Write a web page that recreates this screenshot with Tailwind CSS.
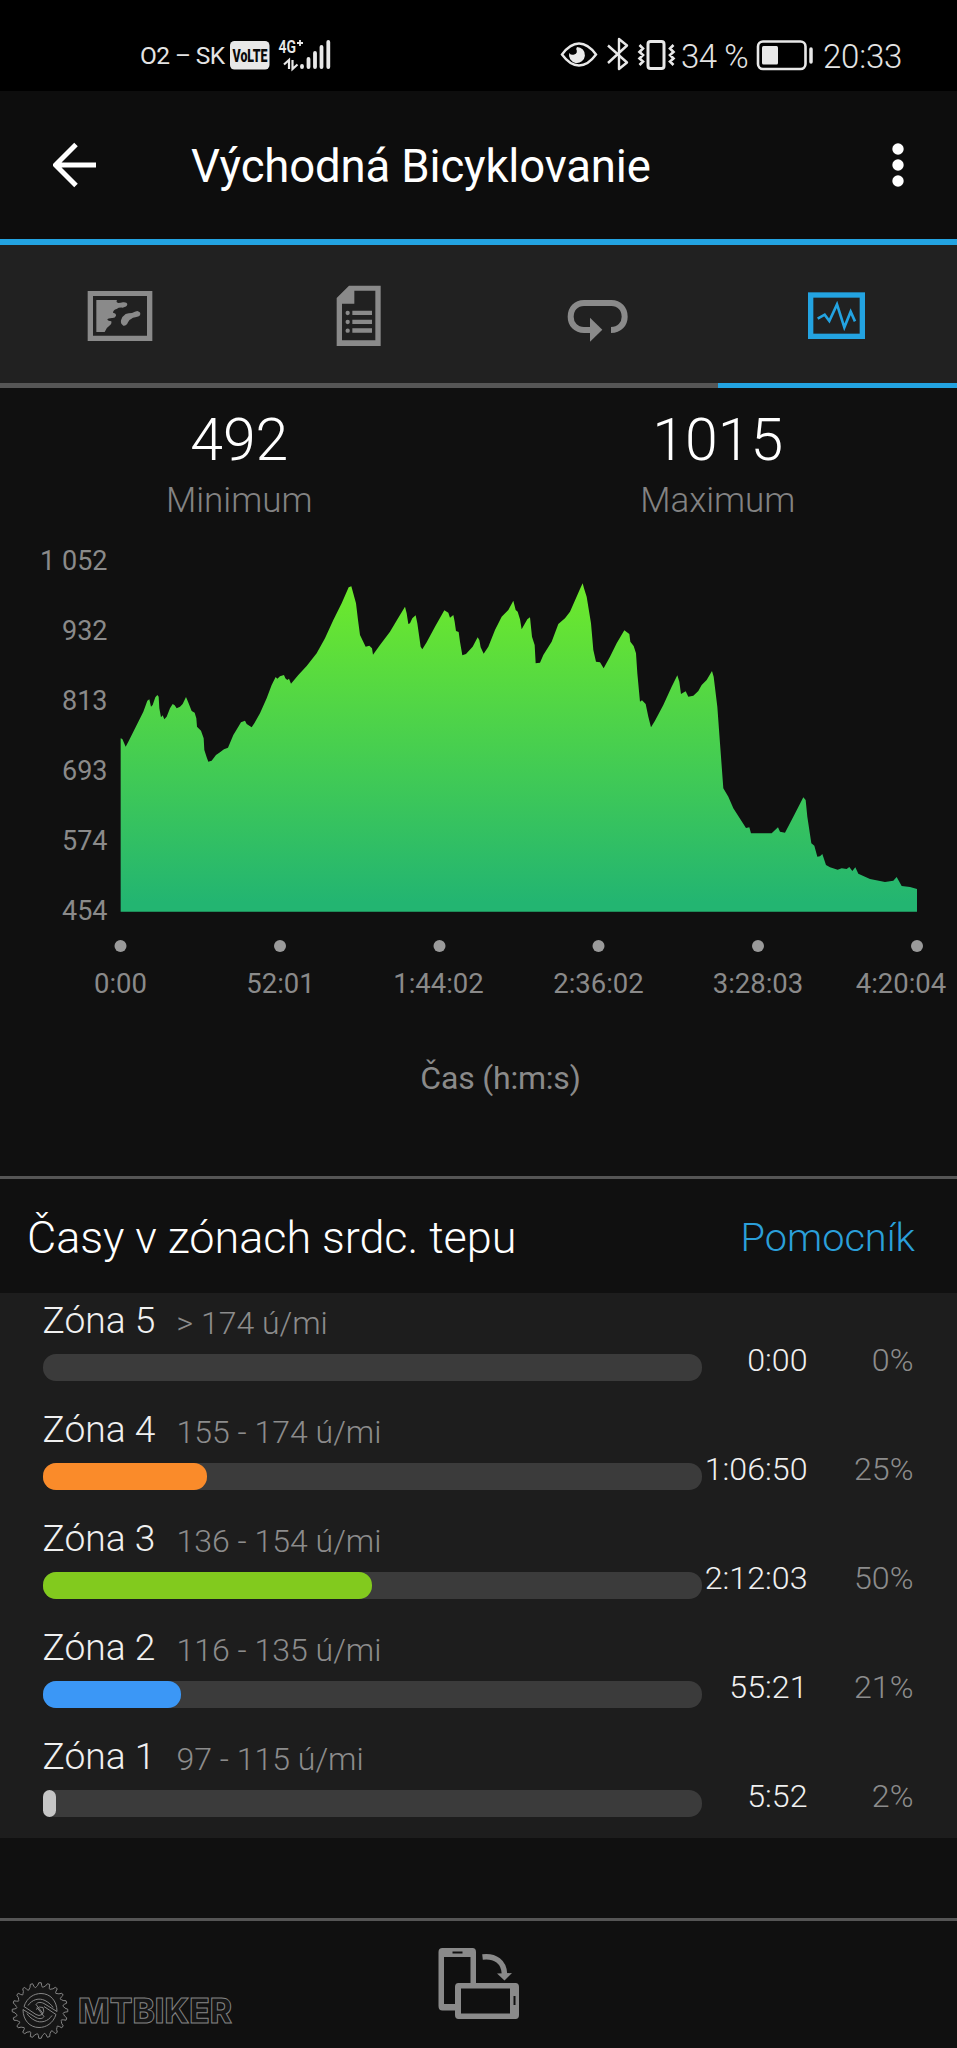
<!DOCTYPE html>
<html lang="sk">
<head>
<meta charset="utf-8">
<title>Východná Bicyklovanie</title>
<script src="https://cdn.jsdelivr.net/npm/@tailwindcss/browser@4"></script>
</head>
<body class="bg-[#101010] w-[957px] h-[2048px] overflow-hidden flex flex-col font-[Roboto,sans-serif] text-white">

<!-- Status bar -->
<div class="h-[91px] shrink-0 bg-black flex items-center pl-[140px] pr-[54px] pt-[32px] pb-[13px] text-[#e4e4e4]">
  <span class="w-[90px] text-[24.5px] leading-[46px] pt-[2px] tracking-[-0.6px] font-normal whitespace-nowrap">O2 – SK</span>
  <svg class="w-[104px] h-[36px]" viewBox="230 37 104 36" fill="#e8e8e8">
    <rect x="230" y="41" width="39.5" height="28.5" rx="4.5"/>
    <text x="232.5" y="61.8" font-family="Roboto, sans-serif" font-weight="900" font-size="19" textLength="35" lengthAdjust="spacingAndGlyphs" fill="#0a0a0a">VoLTE</text>
    <text x="278.5" y="53" font-family="Roboto, sans-serif" font-weight="600" font-size="17.5" textLength="17.5" lengthAdjust="spacingAndGlyphs">4G</text>
    <path d="M297 43h6M300 40v6" stroke="#e8e8e8" stroke-width="1.8"/>
    <path d="M284 64.5l5-4.500v9M292.500 60v9l5-4.500" fill="none" stroke="#e8e8e8" stroke-width="2.200"/>
    <g stroke="#e8e8e8" stroke-width="3.800" stroke-linecap="round"><path d="M302 66v1M308.500 59v8M315 53v14M321.500 47v20M328.300 42v25"/></g>
  </svg>
  <svg class="w-[116px] h-[36px] ml-[226px]" viewBox="560 37 116 36" fill="none" stroke="#e8e8e8" stroke-width="2.400">
    <path d="M562 54.500Q570 43.500 579 43.500T596 54.500Q588 65.500 579 65.500T562 54.500Z"/>
    <path d="M577 47a8 8 0 1 1-7.800 6q1.800 2.500 5 1.600 4-1.600 2-5.600z" fill="#e8e8e8" stroke="none"/>
    <path d="M608 45.500l19 17-8 6.500v-30l8 6.500-19 17.500" stroke-linejoin="round"/>
    <rect x="648" y="41.500" width="16" height="27" rx="2.500" stroke-width="3"/>
    <path d="M639.500 45l3.500 3.500-3.500 3.500 3.500 3-3.500 3.500 3.500 3-3.500 3.500M673.500 45l-3.500 3.500 3.500 3.500-3.500 3 3.500 3.500-3.500 3 3.500 3.500" stroke-width="2.600"/>
  </svg>
  <span class="ml-[5px] w-[75px] text-[33px] leading-[46px] pt-[3px] tracking-[-0.5px] font-light whitespace-nowrap">34 %</span>
  <svg class="w-[58px] h-[36px]" viewBox="756 37 58 36" fill="none" stroke="#e8e8e8">
    <rect x="758" y="41.500" width="47.500" height="27.500" rx="5" stroke-width="2.600"/>
    <rect x="762" y="46" width="16" height="18.500" rx="1.500" fill="#e8e8e8" stroke="none"/>
    <path d="M811 49v13" stroke-width="3.500" stroke-linecap="round"/>
  </svg>
  <span class="ml-[9px] text-[33px] leading-[46px] pt-[3px] tracking-[-0.2px] font-light whitespace-nowrap">20:33</span>
</div>

<!-- App bar -->
<header class="h-[148px] shrink-0 bg-[#0d0d0d] flex items-center">
  <svg class="w-[44px] h-[46px] ml-[53px]" viewBox="53 142 44 46" fill="none" stroke="#fff" stroke-width="5"><path d="M96 165H56M76 144.500L55.500 165L76 185.500"/></svg>
  <h1 class="ml-[94px] pt-[4px] w-[701px] text-[45.5px] leading-[52px] font-normal tracking-[-0.15px] whitespace-nowrap">Východná Bicyklovanie</h1>
  <svg class="w-[12px] h-[46px]" viewBox="0 0 12 46" fill="#fff"><circle cx="6" cy="7" r="5.700"/><circle cx="6" cy="23" r="5.700"/><circle cx="6" cy="39" r="5.700"/></svg>
</header>
<div class="h-[6px] shrink-0 bg-[#23a3e1]"></div>

<!-- Tabs -->
<nav class="h-[143px] shrink-0 grid grid-cols-4 bg-[#212121] justify-items-center">
  <div class="w-full flex justify-center border-b-[5px] border-[#565656]">
    <svg class="w-[66px] h-[138px]" viewBox="80 -75 198 414" fill="#8a8a8a">
      <path fill-rule="evenodd" d="M82 63H276V213H82ZM98 78V197H260V78Z"/>
      <path d="M108 90H170Q166 97 174 99Q181 99 188 97Q200 96 201 103Q200 111 187 113Q175 112 169 117Q158 120 158 128Q168 130 167 137Q164 145 155 144Q142 144 141 149Q143 153 153 154Q155 162 147 167Q137 173 133 186H108Z"/>
      <path d="M231 123Q243 126 239 136Q233 142 218 143Q207 148 203 157Q199 168 189 167Q180 162 182 151Q186 138 196 132Q205 129 215 129Q224 125 231 123Z"/>
    </svg>
  </div>
  <div class="w-full flex justify-center border-b-[5px] border-[#565656]">
    <svg class="w-[66px] h-[138px]" viewBox="797 -75 198 414" fill="#8a8a8a">
      <path fill-rule="evenodd" d="M866 47H961V228H829V84ZM882 62V101H845V211H945V62Z"/>
      <circle cx="862" cy="129" r="6.500"/><circle cx="862" cy="156" r="6.500"/><circle cx="862" cy="182" r="6.500"/>
      <path d="M876 122h59v13h-59zM876 149h59v13h-59zM876 175h59v13h-59z"/>
    </svg>
  </div>
  <div class="w-full flex justify-center border-b-[5px] border-[#565656]">
    <svg class="w-[66px] h-[138px]" viewBox="45 -75 198 414" fill="none">
      <path d="M122 180H102C78 180 62 163 62 140C62 116 78 99 102 99H184C208 99 224 116 224 140C224 163 208 180 183 180" stroke="#8a8a8a" stroke-width="18"/>
      <path d="M120 143L157 179L120 215Z" fill="#8a8a8a"/>
    </svg>
  </div>
  <div class="w-full flex justify-center border-b-[5px] border-[#23a3e1]">
    <svg class="w-[66px] h-[138px]" viewBox="762 -75 198 414" fill="none" stroke="#23a3e1">
      <rect x="782" y="75" width="155" height="124" stroke-width="16"/>
      <path d="M803 146L824 134L838 153L861 103L883 172L902 125L915 154" stroke-width="8"/>
    </svg>
  </div>
</nav>

<!-- Extremes -->
<section class="h-[132px] shrink-0 grid grid-cols-2 text-center pt-[22px] font-light">
  <div>
    <div class="text-[59px] leading-[60px]">492</div>
    <div class="mt-[11px] text-[35px] leading-[40px] text-[#838383]">Minimum</div>
  </div>
  <div>
    <div class="text-[59px] leading-[60px]">1015</div>
    <div class="mt-[11px] text-[35px] leading-[40px] text-[#838383]">Maximum</div>
  </div>
</section>

<!-- Elevation chart -->
<svg class="w-[957px] h-[656px] shrink-0 block" viewBox="0 520 957 656" font-family="Roboto, sans-serif">
  <defs><linearGradient id="elev" gradientUnits="userSpaceOnUse" x1="0" y1="70" x2="0" y2="1055">
    <stop offset="0" stop-color="#6eea2b"/><stop offset="0.970" stop-color="#23b571"/><stop offset="1" stop-color="#23b571"/>
  </linearGradient></defs>
  <polygon transform="translate(100 560) scale(.33333)" fill="url(#elev)" points="62,535 67,537 77,560 85,545 100,515 130,455 142,422 148,418 153,440 158,435 166,412 172,405 176,410 178,445 183,472 188,466 193,478 200,470 210,445 218,432 224,436 230,445 240,440 248,432 258,411 264,425 275,453 284,458 289,475 291,500 303,512 311,535 313,570 320,592 325,605 335,602 348,585 358,578 372,568 384,563 400,525 415,500 423,487 435,482 440,492 455,502 463,490 480,460 500,415 515,375 527,351 532,356 540,349 552,345 556,355 562,360 567,356 573,371 595,345 620,318 650,280 675,235 700,180 725,130 746,82 754,79 768,130 774,180 780,225 797,260 808,257 816,265 819,284 840,255 870,215 895,173 915,140 920,160 925,192 930,190 937,175 947,166 952,190 957,225 962,260 967,268 980,247 1005,200 1033,151 1045,158 1050,173 1060,165 1064,185 1068,213 1076,216 1080,245 1087,286 1098,282 1118,260 1133,232 1138,240 1142,262 1151,281 1165,260 1185,210 1205,170 1225,150 1240,122 1247,150 1253,155 1260,178 1265,208 1276,188 1282,178 1290,172 1296,230 1304,255 1307,310 1320,308 1330,285 1355,245 1375,192 1395,175 1410,155 1440,87 1448,70 1452,85 1460,110 1473,190 1480,270 1488,305 1500,307 1511,325 1530,290 1550,250 1573,211 1588,222 1591,245 1601,258 1608,280 1612,340 1620,425 1626,421 1637,432 1645,470 1653,502 1665,482 1690,435 1715,380 1732,346 1738,365 1743,402 1757,394 1765,410 1780,407 1795,393 1805,375 1820,360 1836,333 1841,350 1852,440 1860,550 1870,685 1885,710 1900,745 1938,804 1948,802 1953,820 2015,820 2034,802 2040,815 2055,818 2080,770 2110,712 2117,720 2122,770 2134,850 2143,857 2152,890 2160,889 2167,882 2178,915 2190,922 2213,929 2225,925 2240,927 2248,921 2257,933 2266,922 2275,941 2310,957 2355,966 2380,962 2390,951 2405,978 2430,981 2451,987 2451,1055 62,1055"/>
  <g fill="#8a8a8a" font-size="27" text-anchor="end">
    <text x="107.500" y="570">1 052</text><text x="107.500" y="640">932</text><text x="107.500" y="710">813</text>
    <text x="107.500" y="780">693</text><text x="107.500" y="850">574</text><text x="107.500" y="920">454</text>
  </g>
  <g fill="#9a9a9a">
    <circle cx="120.500" cy="946" r="6"/><circle cx="280" cy="946" r="6"/><circle cx="439.500" cy="946" r="6"/>
    <circle cx="598.500" cy="946" r="6"/><circle cx="758" cy="946" r="6"/><circle cx="917" cy="946" r="6"/>
  </g>
  <g fill="#8a8a8a" font-size="27.500" text-anchor="middle">
    <text x="120.500" y="993">0:00</text><text x="280.500" y="993">52:01</text><text x="438.500" y="993">1:44:02</text>
    <text x="598.500" y="993">2:36:02</text><text x="758" y="993">3:28:03</text><text x="901" y="993">4:20:04</text>
  </g>
  <text x="500.500" y="1089" fill="#8a8a8a" font-size="32" letter-spacing="-0.2" text-anchor="middle">Čas (h:m:s)</text>
</svg>

<!-- Heart rate zones -->
<section class="h-[117px] shrink-0 border-t-[3px] border-[#555555] flex items-center justify-between pl-[27px] pr-[42px] font-light">
  <h2 class="text-[45px] leading-[60px] pt-[4px] tracking-[-0.05px] whitespace-nowrap">Časy v zónach srdc. tepu</h2>
  <a class="text-[39.7px] leading-[60px] pt-[3px] text-[#2b9fd9]">Pomocník</a>
</section>
<section class="h-[545px] shrink-0 bg-[#1d1d1d] pl-[42.5px] font-light">
  <div class="h-[109px] pt-[7px]">
    <div class="h-[40px] flex items-baseline leading-[40px]"><span class="w-[134px] text-[37.2px] text-[#f0f0f0]">Zóna 5</span><span class="text-[32px] text-[#8c8c8c] translate-y-px">&gt; 174 ú/mi</span></div>
    <div class="h-[41px] flex leading-[41px] text-[32.2px]">
      <div class="w-[659px] h-[27px] self-end rounded-[13px] bg-[#3b3b3b]"></div>
      <span class="w-[106px] text-right text-[#f0f0f0]">0:00</span><span class="w-[106px] text-right text-[#8c8c8c]">0%</span>
    </div>
  </div>
  <div class="h-[109px] pt-[7px]">
    <div class="h-[40px] flex items-baseline leading-[40px]"><span class="w-[134px] text-[37.2px] text-[#f0f0f0]">Zóna 4</span><span class="text-[32px] text-[#8c8c8c] translate-y-px">155 - 174 ú/mi</span></div>
    <div class="h-[41px] flex leading-[41px] text-[32.2px]">
      <div class="w-[659px] h-[27px] self-end rounded-[13px] bg-[#3b3b3b]"><div class="h-full rounded-[13px] bg-[#fa8b2a]" style="width:25%"></div></div>
      <span class="w-[106px] text-right text-[#f0f0f0]">1:06:50</span><span class="w-[106px] text-right text-[#8c8c8c]">25%</span>
    </div>
  </div>
  <div class="h-[109px] pt-[7px]">
    <div class="h-[40px] flex items-baseline leading-[40px]"><span class="w-[134px] text-[37.2px] text-[#f0f0f0]">Zóna 3</span><span class="text-[32px] text-[#8c8c8c] translate-y-px">136 - 154 ú/mi</span></div>
    <div class="h-[41px] flex leading-[41px] text-[32.2px]">
      <div class="w-[659px] h-[27px] self-end rounded-[13px] bg-[#3b3b3b]"><div class="h-full rounded-[13px] bg-[#82ca1e]" style="width:50%"></div></div>
      <span class="w-[106px] text-right text-[#f0f0f0]">2:12:03</span><span class="w-[106px] text-right text-[#8c8c8c]">50%</span>
    </div>
  </div>
  <div class="h-[109px] pt-[7px]">
    <div class="h-[40px] flex items-baseline leading-[40px]"><span class="w-[134px] text-[37.2px] text-[#f0f0f0]">Zóna 2</span><span class="text-[32px] text-[#8c8c8c] translate-y-px">116 - 135 ú/mi</span></div>
    <div class="h-[41px] flex leading-[41px] text-[32.2px]">
      <div class="w-[659px] h-[27px] self-end rounded-[13px] bg-[#3b3b3b]"><div class="h-full rounded-[13px] bg-[#3b97f6]" style="width:21%"></div></div>
      <span class="w-[106px] text-right text-[#f0f0f0]">55:21</span><span class="w-[106px] text-right text-[#8c8c8c]">21%</span>
    </div>
  </div>
  <div class="h-[109px] pt-[7px]">
    <div class="h-[40px] flex items-baseline leading-[40px]"><span class="w-[134px] text-[37.2px] text-[#f0f0f0]">Zóna 1</span><span class="text-[32px] text-[#8c8c8c] translate-y-px">97 - 115 ú/mi</span></div>
    <div class="h-[41px] flex leading-[41px] text-[32.2px]">
      <div class="w-[659px] h-[27px] self-end rounded-[13px] bg-[#3b3b3b]"><div class="h-full rounded-[13px] bg-[#c6c6c6]" style="width:2%"></div></div>
      <span class="w-[106px] text-right text-[#f0f0f0]">5:52</span><span class="w-[106px] text-right text-[#8c8c8c]">2%</span>
    </div>
  </div>
</section>

<!-- Footer -->
<footer class="relative mt-[80px] h-[130px] shrink-0 border-t-[3px] border-[#555555] flex justify-center">
  <svg class="w-[82px] h-[73px] mt-[26px]" viewBox="437.500 1947 82 73">
    <path fill="#8a8a8a" fill-rule="evenodd" d="M442 1948H472Q475.500 1948 475.500 1952V1983H470V1957H443.500V2004H455V2010.500H442Q438 2010.500 438 2006V1952Q438 1948 442 1948ZM452 1951.500V1953.500H462V1951.500Z"/>
    <path fill="#8a8a8a" fill-rule="evenodd" d="M458 1983H515Q518.500 1983 518.500 1987V2015Q518.500 2019 515 2019H458Q454.500 2019 454.500 2015V1987Q454.500 1983 458 1983ZM460.500 1988.500V2013.500H509.500V1988.500ZM513 1996V2005H515V1996Z"/>
    <path d="M482 1957C495 1955.500 503.500 1962 504 1974" fill="none" stroke="#8a8a8a" stroke-width="5.500"/>
    <path d="M496.500 1973.500L511.500 1973L504 1980.500Z" fill="#8a8a8a"/>
  </svg>
  <!-- Watermark -->
  <svg class="absolute left-[10px] bottom-[7px] w-[226px] h-[60px]" viewBox="10 1981 226 60" fill="none" stroke="#858585" stroke-width="1">
    <g transform="translate(40 2010.500)">
      <path id="teeth" fill="#161616"/>
      <path d="M-16 -4C-13 -13 -6 -17 1 -17C10 -17 17 -10 17 1L4 -7C0 -9 -3 -8 -4 -6L3 3M-16 -4L-4 4Q-1 6 2 4Q5 1 3 -3Q-1 -5 -4 -1M16 4C13 13 6 17 -1 17C-10 17 -17 10 -17 -1L-4 7C0 9 3 8 4 6L-3 -3M16 4L4 -4M-12 -5C-8 -11 -1 -13 5 -10C9 -8 12 -5 13 -3M12 5C8 11 1 13 -5 10C-9 8 -12 5 -13 3"/>
    </g>
    <text x="78" y="2023" font-family="Inter, sans-serif" font-weight="800" font-size="34.500" textLength="154" lengthAdjust="spacingAndGlyphs" fill="#161616">MTBIKER</text>
  </svg>
</footer>
<script>
// Chainring outline: 20 rounded teeth
const n = 20, p = (r, a) => (r * Math.sin(a)).toFixed(2) + ' ' + (-r * Math.cos(a)).toFixed(2);
let d = '';
for (let i = 0; i < n; i++) {
  const a = i * 2 * Math.PI / n, s = 2 * Math.PI / n;
  d += (i ? 'L' : 'M') + p(27.8, a - s * 0.14) + 'L' + p(27.8, a + s * 0.14) + 'Q' + p(21.5, a + s * 0.28) + ' ' + p(24, a + s * 0.5) + 'Q' + p(24.5, a + s * 0.72) + ' ' + p(27.8, a + s * 0.86);
}
document.getElementById('teeth').setAttribute('d', d + 'Z');
</script>
</body>
</html>
